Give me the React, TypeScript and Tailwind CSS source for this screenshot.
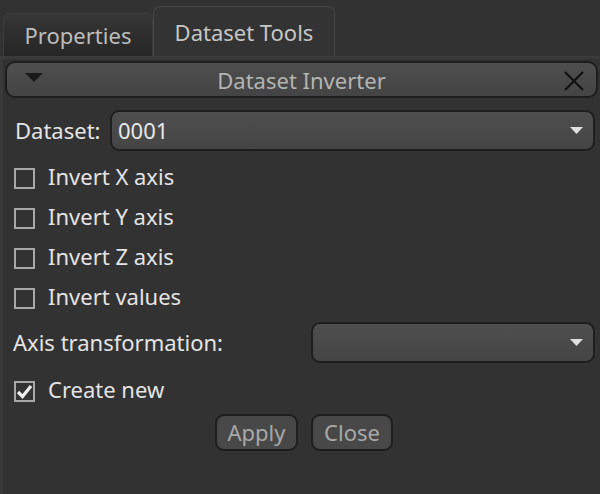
import React from "react";

function Check({ checked = false }: { checked?: boolean }) {
  return (
    <div className="w-[21px] h-[21px] border-2 border-[#a8a8a8] flex items-center justify-center">
      {checked && (
        <svg width="17" height="15" viewBox="0 0 17 15">
          <path d="M2 8 L6.5 12.5 L15 2" stroke="#ececec" strokeWidth="3.2" fill="none" />
        </svg>
      )}
    </div>
  );
}

function Arrow() {
  return (
    <svg width="13" height="8" viewBox="0 0 13 8">
      <path d="M0 0 L13 0 L6.5 7 Z" fill="#e0e0e0" />
    </svg>
  );
}

function CheckRow({ label, checked }: { label: string; checked?: boolean }) {
  return (
    <div className="h-[40px] flex items-center pl-[14px]">
      <Check checked={checked} />
      <span className="ml-[13px] text-[22px] text-[#e4e4e4] pb-[3px]">{label}</span>
    </div>
  );
}

export default function App() {
  return (
    <div
      className="w-[600px] h-[494px] bg-[#323232] overflow-hidden flex flex-col"
      style={{ fontFamily: '"Noto Sans", "Open Sans", sans-serif' }}
    >
      <div className="h-[56px] flex items-end pl-[3px]">
        <div className="w-[150px] h-[43px] rounded-t-[6px] border border-b-0 border-[#3c3c3c] bg-gradient-to-b from-[#363636] to-[#262626] flex items-center justify-center text-[22px] text-[#bdbdbd] pt-[1px]">
          Properties
        </div>
        <div className="w-[182px] h-[50px] rounded-t-[7px] border border-b-0 border-[#474747] bg-[#333333] flex items-center justify-center text-[22px] text-[#c6c6c6] pt-[2px]">
          Dataset Tools
        </div>
      </div>
      <div className="flex-1 border-t-[3px] border-l-[3px] border-[#3a3a3a] pt-[2px] flex flex-col">
        <div className="ml-[2px] mr-[2px] h-[37px] rounded-[10px] border-2 border-[#1e1e1e] bg-gradient-to-b from-[#4e4e4e] to-[#444444] flex items-center relative">
          <svg className="absolute left-[18px] top-[10px]" width="18" height="10" viewBox="0 0 18 10">
            <path d="M0 0 L18 0 L9 9 Z" fill="#1a1a1a" />
          </svg>
          <div className="flex-1 text-center text-[22px] text-[#b4b4b4] pt-[1px]">Dataset Inverter</div>
          <svg className="absolute right-[11px] top-[7px]" width="22" height="22" viewBox="0 0 22 22">
            <path d="M2 2 L20 20 M20 2 L2 20" stroke="#111" strokeWidth="2.2" />
          </svg>
        </div>

        <div className="mt-[12px] h-[41px] flex items-center pl-[12px] pr-[5px]">
          <span className="text-[22px] text-[#e4e4e4] w-[95px]">Dataset:</span>
          <div className="flex-1 h-[41px] rounded-[9px] border-2 border-[#1e1e1e] bg-gradient-to-b from-[#4e4e4e] to-[#454545] flex items-center pl-[6px] pr-[10px]">
            <span className="flex-1 text-[22px] text-[#e8e8e8]">0001</span>
            <Arrow />
          </div>
        </div>

        <div className="mt-[7px] flex flex-col -ml-[3px]">
          <CheckRow label="Invert X axis" />
          <CheckRow label="Invert Y axis" />
          <CheckRow label="Invert Z axis" />
          <CheckRow label="Invert values" />
        </div>

        <div className="mt-[4px] h-[41px] flex items-center pl-[10px] pr-[5px]">
          <span className="text-[22px] text-[#e4e4e4] w-[298px]">Axis transformation:</span>
          <div className="flex-1 h-[41px] rounded-[9px] border-2 border-[#1e1e1e] bg-gradient-to-b from-[#4e4e4e] to-[#454545] flex items-center justify-end pr-[10px]">
            <Arrow />
          </div>
        </div>

        <div className="mt-[8px] -ml-[3px]">
          <CheckRow label="Create new" checked />
        </div>

        <div className="mt-[3px] flex justify-center gap-[13px] ml-[5px]">
          <div className="w-[83px] h-[37px] rounded-[9px] border-2 border-[#1e1e1e] bg-[#484848] flex items-center justify-center text-[22px] text-[#a8a8a8]">
            Apply
          </div>
          <div className="w-[82px] h-[37px] rounded-[9px] border-2 border-[#1e1e1e] bg-[#484848] flex items-center justify-center text-[22px] text-[#a8a8a8]">
            Close
          </div>
        </div>
      </div>
    </div>
  );
}
